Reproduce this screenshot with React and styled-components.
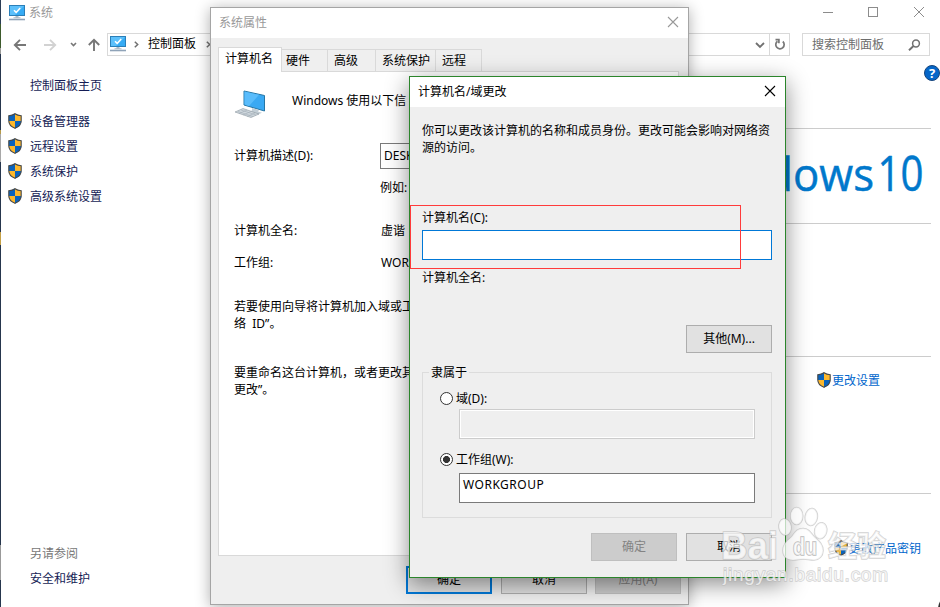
import styled, { createGlobalStyle, css } from "styled-components";

const sidebarLinks = ["设备管理器", "远程设置", "系统保护", "高级系统设置"];

const tabs = [
  { label: "计算机名", width: 64, active: true },
  { label: "硬件", width: 46 },
  { label: "高级", width: 48 },
  { label: "系统保护", width: 60 },
  { label: "远程", width: 46 },
];

const ComputerIcon = () => (
  <svg width="16" height="16" viewBox="0 0 16 16">
    <rect x="0.5" y="0.5" width="15" height="10" fill="#36abf4" stroke="#2b7fb8" />
    <path d="M1 1h14L6 10H1z" fill="#5cc0fb" />
    <path d="M5 5.2l2.2 2.2L11.2 3" fill="none" stroke="#fff" strokeWidth="1.5" />
    <path d="M6.5 11h3v1.2h2v1h-7v-1h2z" fill="#aebbc6" />
    <path d="M0 14.5h16" stroke="#8fa3b8" strokeWidth="1.6" />
  </svg>
);

const ShieldIcon = () => (
  <svg width="14" height="16" viewBox="0 0 14 16">
    <path
      d="M7 .6C5.3 1.8 3.2 2.5.8 2.6V8c0 3.6 2.4 5.9 6.2 7.4 3.8-1.5 6.2-3.8 6.2-7.4V2.6C10.8 2.5 8.7 1.8 7 .6z"
      fill="#fdb82c"
    />
    <path d="M7 .6C5.3 1.8 3.2 2.5.8 2.6V8H7zM7 8v7.4c3.8-1.5 6.2-3.8 6.2-7.4z" fill="#0a63bd" />
    <path
      d="M7 .7C5.3 1.9 3.2 2.6.8 2.7V8c0 3.5 2.4 5.8 6.2 7.3 3.8-1.5 6.2-3.8 6.2-7.3V2.7C10.8 2.6 8.7 1.9 7 .7z"
      fill="none"
      stroke="#45494d"
      strokeWidth="1.1"
    />
  </svg>
);

const CloseIcon = () => (
  <svg width="12" height="12" viewBox="0 0 12 12">
    <path d="M1 1l10 10M11 1L1 11" fill="none" stroke="currentColor" strokeWidth="1.1" />
  </svg>
);

const ChevronRight = () => (
  <svg width="5" height="7" viewBox="0 0 5 7">
    <path d="M.8.7l2.9 2.8L.8 6.3" fill="none" stroke="#707070" strokeWidth="1.5" />
  </svg>
);

const NavArrows = () => (
  <svg width="106" height="23" viewBox="1 0 106 23" fill="none" strokeWidth="1.9">
    <path d="M26 12H15M20 6.8L14.800 12l5.200 5.200" stroke="#777" />
    <path d="M44 12h11M50 6.800l5.200 5.200L50 17.200" stroke="#d2d2d2" />
    <path d="M71 10l2.500 2.500L76 10" stroke="#777" strokeWidth="1.600" />
    <path d="M94 18V7M88.800 12L94 6.800l5.200 5.200" stroke="#777" />
  </svg>
);

const PcPicture = () => (
  <svg width="32" height="28" viewBox="0 0 32 28">
    <path d="M10 1l20.500 4.500V21L10 15z" fill="#3aa9f3" stroke="#2676a5" strokeWidth="1" />
    <path d="M10.500 1.600L25 4.800 15 16l-4.500-1.400z" fill="#59bcfb" />
    <path d="M18 18l7 2-1 1.500 4 1.200-4 1.800-9-3 3-1z" fill="#c3ced6" />
    <path d="M1 22l8-3.500L25 24l-8 3.500z" fill="#d0d8de" stroke="#8c979f" strokeWidth=".6" />
    <path d="M4 21.500l15 5M7 20l15 5M5 23.500l8-3.500M9 25l8-3.500M13 26.500l8-3.500" stroke="#9ba7b0" strokeWidth=".5" />
  </svg>
);

const Watermark = () => (
  <WatermarkArt width="176" height="90" viewBox="718 504 176 90">
    <g fill="#fff" fillOpacity=".7" stroke="#b4b4b4" strokeOpacity=".6" strokeWidth="1.6">
      <ellipse cx="785" cy="527" rx="6" ry="8" transform="rotate(-10 785 527)" />
      <ellipse cx="796.7" cy="516" rx="6" ry="8.500" />
      <ellipse cx="811.300" cy="517" rx="6" ry="8.500" transform="rotate(8 811.300 517)" />
      <ellipse cx="820.700" cy="530.700" rx="6" ry="8" transform="rotate(12 820.700 530.700)" />
      <path d="M803 528.500c-6 0-8 4-11 8-4 4-9 7-9 14 0 6 4 9.500 10 9.500 4 0 6-1 10-1s7 1 11 1c5 0 9-4 9-9.500 0-7-5-10-9-14-4-5-6-8-11-8z" />
      <text x="721" y="559" fontSize="38" fontWeight="700" textLength="57" lengthAdjust="spacingAndGlyphs">Bai</text>
      <text x="793" y="555" fontSize="23" fontWeight="700" textLength="24" lengthAdjust="spacingAndGlyphs" strokeOpacity=".9">du</text>
      <text x="828" y="557" fontSize="29" fontWeight="700" textLength="58">经验</text>
      <text x="723" y="581" fontSize="19" textLength="165" strokeWidth="1.3">jingyan.baidu.com</text>
    </g>
  </WatermarkArt>
);

const App = () => (
  <>
    <GlobalStyle />
    <Screen>
      <TitleBar>
        <ComputerIcon />
        <TitleText>系统</TitleText>
        <WindowControls>
          <svg width="102" height="12" viewBox="0 0 102 12" fill="none" stroke="#8c8c8c">
            <path d="M0 6.500h10M91 1l10 10M101 1L91 11" />
            <rect x="45.500" y="1.500" width="9" height="9" />
          </svg>
        </WindowControls>
      </TitleBar>

      <Toolbar>
        <NavArrows />
        <AddressBar>
          <ComputerIcon />
          <ChevronRight />
          <Crumb>控制面板</Crumb>
          <ChevronRight />
          <AddressEnd>
            <svg width="10" height="7" viewBox="0 0 10 7">
              <path d="M1 1l4 4 4-4" fill="none" stroke="#707070" strokeWidth="1.8" />
            </svg>
          </AddressEnd>
          <RefreshCell>
            <svg width="12" height="13" viewBox="0 0 12 13" fill="none" stroke="#777" strokeWidth="1.7">
              <path d="M3.500 3.200A4.200 4.200 0 1 0 8.800 3.500" />
              <path d="M1.500 1.700h3.400v3.500" />
            </svg>
          </RefreshCell>
        </AddressBar>
        <SearchBox>
          <span>搜索控制面板</span>
          <svg width="13" height="12" viewBox="0 0 13 12" fill="none" stroke="#707070">
            <circle cx="8" cy="4.5" r="3.4" strokeWidth="1.5" />
            <path d="M5.500 7L1 11.300" strokeWidth="1.9" />
          </svg>
        </SearchBox>
      </Toolbar>

      <Body>
        <Sidebar>
          <HomeLink>控制面板主页</HomeLink>
          {sidebarLinks.map((label) => (
            <SidebarLink key={label}>
              <ShieldIcon />
              {label}
            </SidebarLink>
          ))}
          <SeeAlso>
            <SeeAlsoTitle>另请参阅</SeeAlsoTitle>
            <div>安全和维护</div>
          </SeeAlso>
        </Sidebar>
        <Content>
          <HelpRow>
            <HelpButton>?</HelpButton>
          </HelpRow>
          <Section $height={95}>
            <Logo width="240" height="94" viewBox="691 129 240 94">
              <text x="688" y="190.5" fontSize="46" textLength="186" lengthAdjust="spacingAndGlyphs">Windows</text>
              <text x="877.500" y="190.500" fontSize="49" textLength="46" lengthAdjust="spacingAndGlyphs">10</text>
            </Logo>
          </Section>
          <Section $height={133} />
          <Section $height={137}>
            <ActionLink $top={15} $right={51}>
              <ShieldIcon />
              <span>更改设置</span>
            </ActionLink>
          </Section>
          <Section $height={113}>
            <ActionLink $top={46} $right={10}>
              <ShieldIcon />
              <span>更改产品密钥</span>
            </ActionLink>
          </Section>
        </Content>
      </Body>
      <CornerMark />

      <PropertiesDialog>
        <DialogTitle $inactive>
          系统属性
          <CloseIcon />
        </DialogTitle>
        <TabStrip>
          {tabs.map((tab) => (
            <Tab key={tab.label} $width={tab.width} $active={tab.active}>
              {tab.label}
            </Tab>
          ))}
        </TabStrip>
        <TabPanel>
          <Intro>
            <PcPicture />
            <span>Windows 使用以下信</span>
          </Intro>
          <FieldGrid>
            <span>计算机描述(D):</span>
            <DescriptionInput>DESK</DescriptionInput>
            <span />
            <Example>例如:</Example>
            <span>计算机全名:</span>
            <span>虚谐</span>
            <span>工作组:</span>
            <span>WORK</span>
          </FieldGrid>
          <Hint>
            若要使用向导将计算机加入域或工
            <br />
            络&nbsp; ID”。
          </Hint>
          <Hint>
            要重命名这台计算机，或者更改其
            <br />
            更改”。
          </Hint>
        </TabPanel>
        <PropertiesButtons>
          <Button $primary>确定</Button>
          <Button>取消</Button>
          <Button $disabled>应用(A)</Button>
        </PropertiesButtons>
      </PropertiesDialog>

      <RenameDialog>
        <DialogTitle>
          计算机名/域更改
          <CloseIcon />
        </DialogTitle>
        <RenameBody>
          <Description>
            你可以更改该计算机的名称和成员身份。更改可能会影响对网络资
            <br />
            源的访问。
          </Description>
          <Label>计算机名(C):</Label>
          <TextBox $focused />
          <FullNameLabel>计算机全名:</FullNameLabel>
          <MoreRow>
            <Button>其他(M)...</Button>
          </MoreRow>
          <MemberGroup>
            <GroupLegend>隶属于</GroupLegend>
            <RadioRow>
              <Radio />
              域(D):
            </RadioRow>
            <TextBox $disabled />
            <RadioRow>
              <Radio $checked />
              工作组(W):
            </RadioRow>
            <TextBox>WORKGROUP</TextBox>
          </MemberGroup>
          <RenameButtons>
            <Button $disabled>确定</Button>
            <Button>取消</Button>
          </RenameButtons>
        </RenameBody>
      </RenameDialog>

      <Highlight />
      <Watermark />
    </Screen>
  </>
);

export default App;

const GlobalStyle = createGlobalStyle`
  * {
    box-sizing: border-box;
  }

  body {
    margin: 0;
    overflow: hidden;
  }

  svg {
    display: block;
    flex-shrink: 0;
  }
`;

const Screen = styled.div`
  position: relative;
  display: flex;
  flex-direction: column;
  width: 940px;
  height: 607px;
  overflow: hidden;
  padding-left: 1px;
  background: linear-gradient(
      #2b3d55 0 24px,
      #3d5a2c 24px 48px,
      #9b9b98 48px 54px,
      #26364d 54px 130px,
      #b59a4a 130px 134px,
      #a8a8a8 134px 162px,
      #26364d 162px 232px,
      #c5a045 232px 245px,
      #26364d 245px 545px,
      #999 545px 580px,
      #26364d 580px
    )
    0 0 / 1px 100% no-repeat #fff;
  font-family: "Noto Sans", "Noto Sans CJK SC", sans-serif;
  font-size: 12px;
  line-height: 16px;
  color: #000;
  white-space: nowrap;
`;

const TitleBar = styled.div`
  display: flex;
  align-items: center;
  height: 26px;
  padding: 0 15px 0 8px;

  > svg {
    margin-top: -1px;
  }
`;

const TitleText = styled.span`
  margin-left: 4px;
  color: #999;
`;

const WindowControls = styled.div`
  margin-left: auto;
  padding-bottom: 2px;
`;

const Toolbar = styled.div`
  display: flex;
  margin-top: 7px;
  padding-right: 10px;
`;

const AddressBar = styled.div`
  display: flex;
  align-items: center;
  flex: 1;
  height: 23px;
  padding-left: 2px;
  border: 1px solid #d9d9d9;

  > svg:first-child {
    margin-top: -2px;
  }

  > svg + svg {
    margin-left: 8px;
  }
`;

const Crumb = styled.span`
  margin: -2px 10px 0 9px;
`;

const AddressEnd = styled.div`
  margin-left: auto;
  padding: 2px 4px 0 0;
`;

const RefreshCell = styled.div`
  display: flex;
  align-items: center;
  justify-content: center;
  width: 20px;
  height: 21px;
  border-left: 1px solid #d9d9d9;
`;

const SearchBox = styled.div`
  display: flex;
  align-items: center;
  justify-content: space-between;
  width: 128px;
  height: 23px;
  margin-left: 12px;
  padding: 0 8px 0 9px;
  border: 1px solid #d9d9d9;
  color: #6d6d6d;
`;

const Body = styled.div`
  display: flex;
  flex: 1;
`;

const Sidebar = styled.div`
  display: flex;
  flex-direction: column;
  width: 209px;
  padding: 22px 0 16px 7px;
  color: #151c55;
`;

const HomeLink = styled.div`
  margin: 0 0 15px 22px;
`;

const SidebarLink = styled.div`
  display: flex;
  align-items: center;
  gap: 8px;
  height: 25px;

  svg {
    margin-top: -2px;
  }
`;

const SeeAlso = styled.div`
  margin: auto 0 0 22px;
  line-height: 25px;
`;

const SeeAlsoTitle = styled.div`
  color: #777;
`;

const Content = styled.div`
  flex: 1;
  margin-right: 9px;
`;

const HelpRow = styled.div`
  display: flex;
  justify-content: flex-end;
  height: 72px;
  margin-right: -9px;
  padding-top: 9px;
`;

const HelpButton = styled.div`
  width: 16px;
  height: 16px;
  border: 1px solid #16457c;
  border-radius: 50%;
  background: #0566c8;
  color: #fff;
  font-size: 13px;
  font-weight: 700;
  line-height: 14px;
  text-align: center;
`;

const Section = styled.div`
  display: flex;
  justify-content: flex-end;
  height: ${(props) => props.$height}px;
  border-top: 1px solid #ccc;
`;

const Logo = styled.svg`
  fill: #0078cc;
  stroke: #0078cc;
  stroke-width: 0.5px;
  font-family: "Open Sans", sans-serif;
`;

const ActionLink = styled.div`
  display: flex;
  align-items: center;
  gap: 1px;
  height: 16px;
  margin-top: ${(props) => props.$top}px;
  margin-right: ${(props) => props.$right}px;
  color: #0066cc;

  span {
    padding-top: 2px;
  }
`;

const CornerMark = styled.div`
  position: absolute;
  left: 938px;
  top: 599px;
  width: 12px;
  height: 20px;
  border-radius: 50%;
  background: #333;
`;

const Dialog = styled.div`
  position: absolute;
  display: flex;
  flex-direction: column;
  background: #efefef;
`;

const PropertiesDialog = styled(Dialog)`
  left: 210px;
  top: 7px;
  width: 479px;
  height: 598px;
  border: 1px solid #a5a5a5;
  box-shadow: 0 2px 14px rgba(0, 0, 0, 0.32);
`;

const RenameDialog = styled(Dialog)`
  left: 409px;
  top: 76px;
  width: 377px;
  height: 502px;
  border: 1px solid #2b852b;
  box-shadow: 0 6px 22px rgba(0, 0, 0, 0.45);
`;

const DialogTitle = styled.div`
  display: flex;
  align-items: center;
  justify-content: space-between;
  height: 30px;
  padding: 0 9px 0 8px;
  background: #fff;
  color: ${(props) => (props.$inactive ? "#999" : "#000")};

  svg {
    margin-top: -2px;
  }
`;

const TabStrip = styled.div`
  display: flex;
  align-items: flex-end;
  margin: 9px 0 -1px 7px;
`;

const Tab = styled.div`
  width: ${(props) => props.$width}px;
  height: 23px;
  padding: 3px 0 0 6px;
  border: 1px solid #d9d9d9;
  border-left: none;

  &:nth-child(2) {
    padding-left: 4px;
  }

  ${(props) =>
    props.$active &&
    css`
      position: relative;
      z-index: 1;
      height: 25px;
      padding: 3px 0 0 6px;
      border-left: 1px solid #d9d9d9;
      border-bottom: none;
      background: #fff;
    `}
`;

const TabPanel = styled.div`
  width: 461px;
  height: 485px;
  margin-left: 7px;
  padding: 18px 0 0 15px;
  border: 1px solid #d9d9d9;
  background: #fff;
`;

const Intro = styled.div`
  display: flex;
  gap: 26px;
  height: 53px;

  span {
    margin-top: 3px;
  }
`;

const FieldGrid = styled.div`
  display: grid;
  grid-template-columns: 147px 200px;
  grid-template-rows: 26px 38px 48px 16px;
  align-items: center;
  height: 131px;
`;

const DescriptionInput = styled.div`
  height: 26px;
  margin-left: -1px;
  padding: 4px 3px;
  border: 1px solid #7a7a7a;
`;

const Example = styled.span`
  margin-left: -1px;
`;

const Hint = styled.p`
  margin: 24px 0 0;
  line-height: 17px;

  & + & {
    margin-top: 32px;
  }
`;

const PropertiesButtons = styled.div`
  display: flex;
  gap: 9px;
  margin: 10px 0 0 195px;

  > :last-child {
    margin-left: -1px;
  }
`;

const Button = styled.div`
  width: 86px;
  height: 28px;
  border: 1px solid #adadad;
  background: #e1e1e1;
  line-height: 26px;
  text-align: center;

  ${(props) =>
    props.$primary &&
    css`
      border: 2px solid #0078d7;
      line-height: 24px;
    `}

  ${(props) =>
    props.$disabled &&
    css`
      border-color: #bfbfbf;
      background: #ccc;
      color: #838383;
    `}
`;

const RenameBody = styled.div`
  padding: 15px 13px 0 12px;
`;

const Description = styled.div`
  height: 88px;
  line-height: 17px;
`;

const Label = styled.div`
  height: 20px;
`;

const TextBox = styled.div`
  height: 30px;
  padding: 3px;
  border: 1px solid #7a7a7a;
  background: #fff;
  letter-spacing: 0.5px;

  ${(props) => props.$focused && "border-color: #0078d7;"}

  ${(props) =>
    props.$disabled &&
    css`
      border-color: #ccc;
      background: #efefef;
      box-shadow: inset 0 0 0 1px #fff;
    `}
`;

const FullNameLabel = styled.div`
  margin-top: 10px;
`;

const MoreRow = styled.div`
  display: flex;
  justify-content: flex-end;
  margin-top: 39px;
`;

const MemberGroup = styled.div`
  height: 146px;
  margin-top: 19px;
  padding: 0 16px 0 36px;
  border: 1px solid #dcdcdc;
`;

const GroupLegend = styled.div`
  width: 40px;
  height: 16px;
  margin: -8px 0 8px -30px;
  padding-left: 2px;
  background: #efefef;
`;

const RadioRow = styled.div`
  display: flex;
  align-items: center;
  gap: 3px;
  height: 20px;
  margin-left: -19px;

  ${TextBox} + & {
    margin: 11px 0 3px -19px;
  }
`;

const Radio = styled.span`
  width: 13px;
  height: 13px;
  margin-top: -1px;
  border: 1px solid #333;
  border-radius: 50%;
  background: ${(props) => (props.$checked ? "radial-gradient(circle, #333 0 3.2px, #fff 3.8px)" : "#fff")};
`;

const RenameButtons = styled.div`
  display: flex;
  justify-content: flex-end;
  gap: 9px;
  margin-top: 15px;
`;

const Highlight = styled.div`
  position: absolute;
  left: 410px;
  top: 205px;
  width: 331px;
  height: 64px;
  border: 1px solid #ff3b3b;
`;

const WatermarkArt = styled.svg`
  position: absolute;
  left: 718px;
  top: 504px;
  font-family: "Liberation Sans", "Noto Sans CJK SC", sans-serif;
  paint-order: stroke;
`;
